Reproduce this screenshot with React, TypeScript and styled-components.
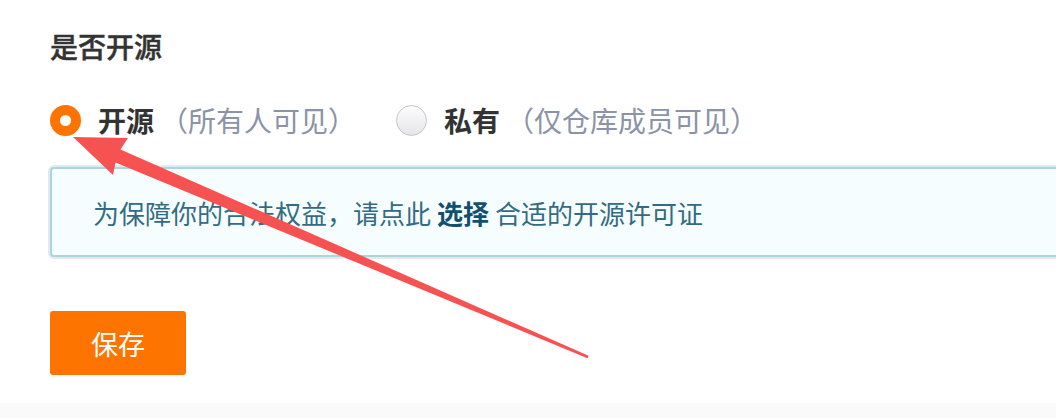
import styled, { createGlobalStyle } from 'styled-components'

const GlobalStyle = createGlobalStyle`
  html, body {
    margin: 0;
    padding: 0;
    background: #ffffff;
    overflow: hidden;
  }
  body {
    font-family: "Noto Sans CJK SC", "Noto Sans", sans-serif;
    color: #333333;
  }
`

const Page = styled.div`
  position: relative;
  width: 1056px;
  height: 418px;
  display: flex;
  flex-direction: column;
  overflow: hidden;
`

const Form = styled.div`
  flex: 1;
  display: flex;
  flex-direction: column;
  padding: 26px 0 0 50px;
`

const Title = styled.div`
  font-size: 28px;
  line-height: 40px;
  font-weight: 500;
  -webkit-text-stroke: 0.45px #333333;
  color: #333333;
`

const RadioGroup = styled.div`
  display: flex;
  align-items: center;
  margin-top: 34px;
  height: 40px;
`

const RadioOption = styled.label`
  display: flex;
  align-items: center;
  margin-right: 40px;
  cursor: pointer;
`

const RadioDot = styled.span<{ checked?: boolean }>`
  width: 31px;
  height: 31px;
  box-sizing: border-box;
  border-radius: 50%;
  flex-shrink: 0;
  ${({ checked }) =>
    checked
      ? `
    border: 10px solid #ff7300;
    background: #ffffff;
  `
      : `
    border: 1.5px solid #c6c6ca;
    background: linear-gradient(180deg, #fdfdfd 0%, #e6e6eb 100%);
  `}
`

const RadioLabel = styled.span`
  margin-left: 17px;
  font-size: 28px;
  font-weight: 700;
  color: #333333;
`

const RadioHint = styled.span`
  margin-left: 6px;
  font-size: 28px;
  color: #8a93a7;
`

const Notice = styled.div`
  margin-top: 27px;
  width: 1060px;
  height: 90px;
  box-sizing: border-box;
  display: flex;
  align-items: center;
  padding-left: 41px;
  border: 2px solid #a9d5df;
  border-radius: 4px;
  background: #f6fdfe;
  box-shadow: 0 0 0 2px #e3e9ee;
  font-size: 26px;
  color: #336c82;
`

const NoticeLink = styled.a`
  font-weight: 700;
  color: #11506e;
  margin: 0 6px;
  text-decoration: none;
`

const SaveButton = styled.button`
  margin-top: 54px;
  width: 136px;
  height: 64px;
  border: none;
  border-radius: 3px;
  background: #fd7400;
  color: #ffffff;
  font-family: inherit;
  font-size: 27px;
  cursor: pointer;
`

const Footer = styled.div`
  height: 15px;
  background: #fafafa;
`

const Annotation = styled.svg`
  position: absolute;
  left: 0;
  top: 0;
  pointer-events: none;
`

export default function App() {
  return (
    <>
      <GlobalStyle />
      <Page>
        <Form>
          <Title>是否开源</Title>
          <RadioGroup>
            <RadioOption>
              <RadioDot checked />
              <RadioLabel>开源</RadioLabel>
              <RadioHint>（所有人可见）</RadioHint>
            </RadioOption>
            <RadioOption>
              <RadioDot />
              <RadioLabel>私有</RadioLabel>
              <RadioHint>（仅仓库成员可见）</RadioHint>
            </RadioOption>
          </RadioGroup>
          <Notice>
            为保障你的合法权益，请点此<NoticeLink href="#">选择</NoticeLink>合适的开源许可证
          </Notice>
          <SaveButton>保存</SaveButton>
        </Form>
        <Footer />
        {/* red annotation arrow drawn over the form */}
        <Annotation width="1056" height="418" viewBox="0 0 1056 418">
          <polygon
            points="73,137 128,138 120.5,149.5 588.6,355.8 587.4,358.2 115.5,162.5 113,175"
            fill="#f75252"
          />
        </Annotation>
      </Page>
    </>
  )
}
